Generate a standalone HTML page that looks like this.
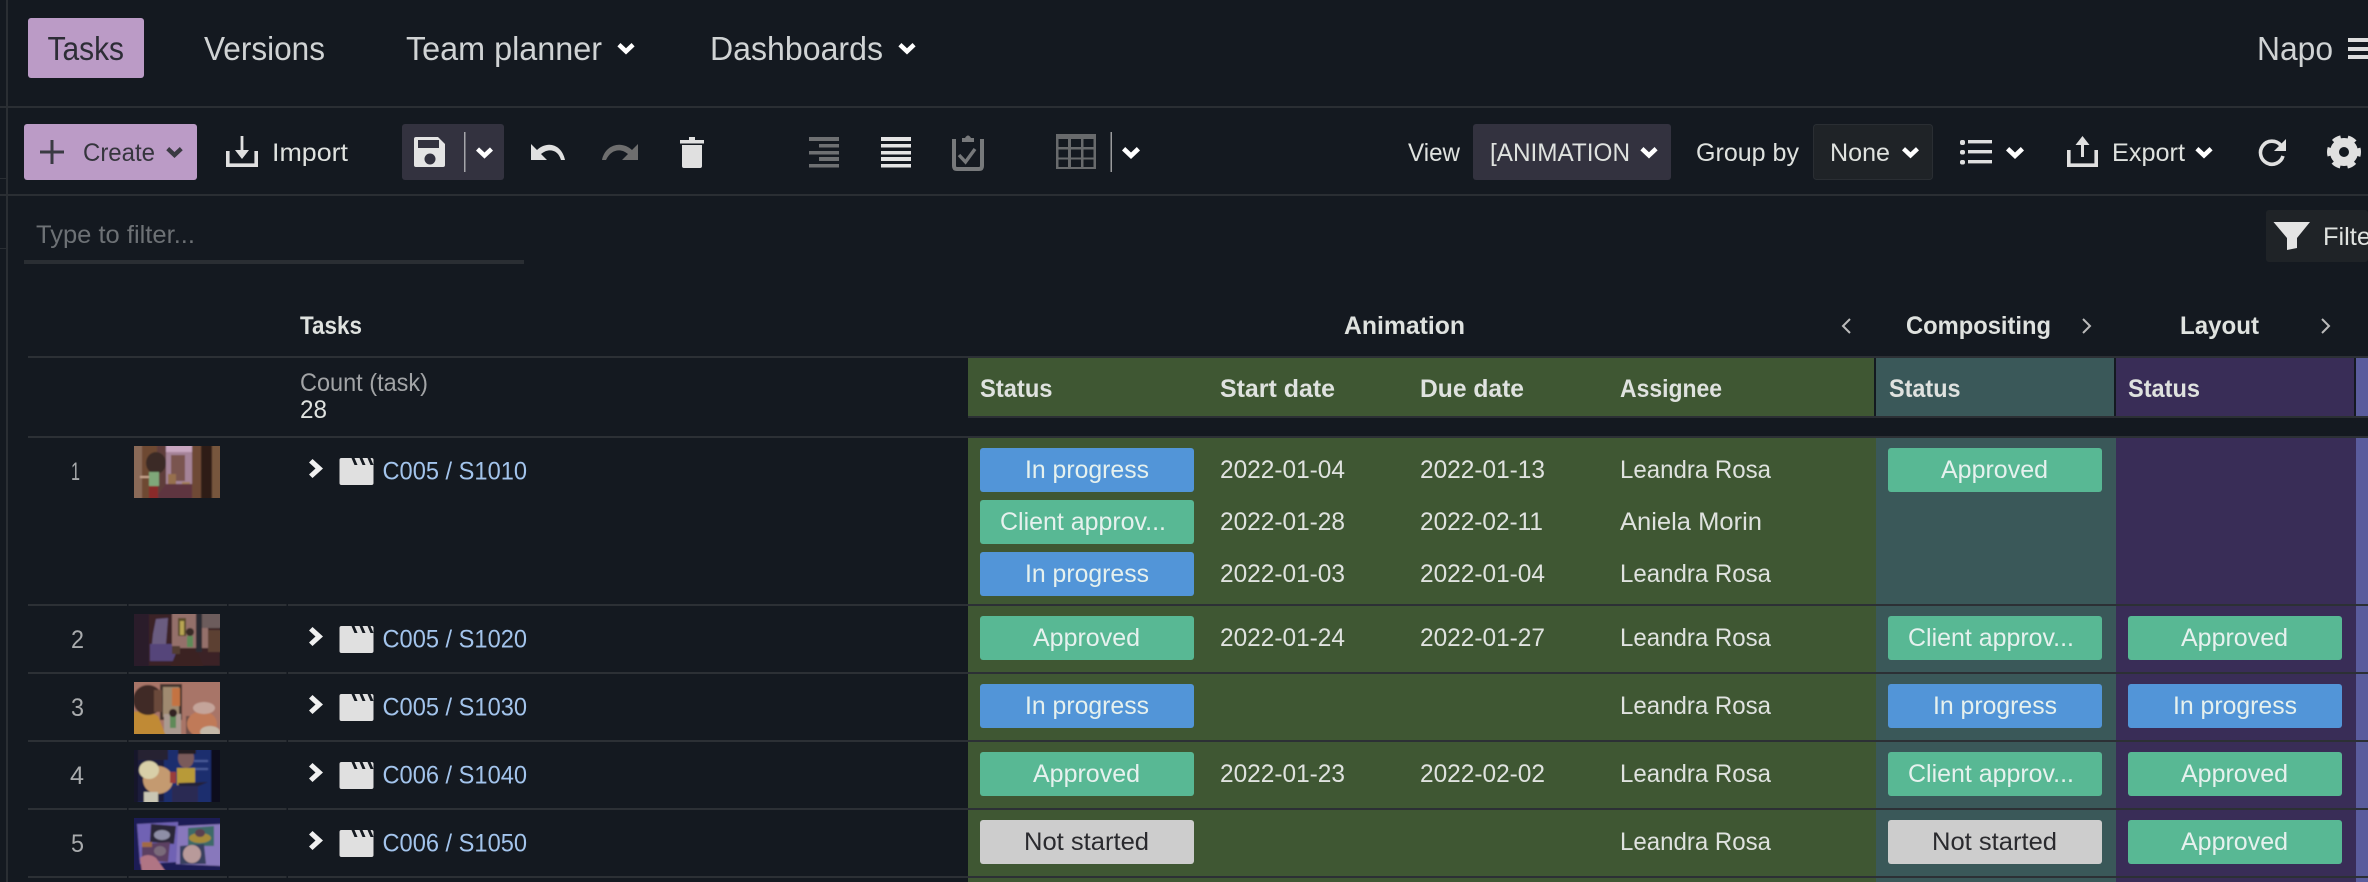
<!DOCTYPE html>
<html><head><meta charset="utf-8"><title>Tasks</title>
<style>
html,body{margin:0;padding:0;background:#141920;width:2368px;height:882px;overflow:hidden}
svg{display:block}
text{font-family:"Liberation Sans",sans-serif;font-size:25px;fill:#dfe2df}
.nav{font-size:33px;fill:#d0d3d4}
.b{font-weight:bold;font-size:25px}
.lnk{fill:#a3c4ec}
.num{fill:#a9abad}
.p{fill:#e6f1ee}
.d{fill:#2a2a2e}
</style></head><body>
<svg xmlns="http://www.w3.org/2000/svg" width="2368" height="882" viewBox="0 0 2368 882">
<defs>
<filter id="bl" x="0" y="0" width="100%" height="100%"><feGaussianBlur stdDeviation="0.9"/></filter>
<symbol id="ch" viewBox="0 0 18 12"><path d="M0 3.5L3.2 0L9 5.5L14.8 0L18 3.5L9 12Z"/></symbol>
<symbol id="rt" viewBox="0 0 14 19"><path d="M0 3.5L3.5 0L14 9.5L3.5 19L0 15.5L6.5 9.5Z" fill="#f0f0f0"/></symbol>
<symbol id="cl" viewBox="0 0 34 27"><path d="M0 2Q0 0 2 0H32Q34 0 34 2V25Q34 27 32 27H2Q0 27 0 25Z" fill="#e0e0e0"/><path d="M0 0H7V7H0ZM12 0h3l3 7h-3zM20 0h3l3 7h-3zM28 0h3l3 7h-3z" fill="#141920"/><path d="M0 2Q0 0 2 0H7V7H0Z" fill="#e0e0e0"/></symbol>
</defs>

<rect width="2368" height="882" fill="#141920"/>
<!-- frame lines -->
<rect x="6" y="0" width="2" height="882" fill="#2a2e33"/>
<rect y="106" width="2368" height="2" fill="#2a2e33"/>
<rect y="194" width="2368" height="2" fill="#2a2e33"/>
<rect y="178" width="6" height="1" fill="#2a2e33"/>
<rect y="248" width="6" height="1" fill="#2a2e33"/>

<!-- nav -->
<rect x="28" y="18" width="116" height="60" rx="3" fill="#bb9bc6"/>
<text class="nav" x="47.5" y="60" textLength="76.5" lengthAdjust="spacingAndGlyphs" style="fill:#2d2d36">Tasks</text>
<text class="nav" x="204" y="60" textLength="121" lengthAdjust="spacingAndGlyphs">Versions</text>
<text class="nav" x="406" y="60" textLength="196" lengthAdjust="spacingAndGlyphs">Team planner</text>
<use href="#ch" x="617" y="43" width="18" height="11.5" fill="#fff"/>
<text class="nav" x="710" y="60" textLength="173" lengthAdjust="spacingAndGlyphs">Dashboards</text>
<use href="#ch" x="898" y="43" width="18" height="11.5" fill="#fff"/>
<text class="nav" x="2257" y="60" textLength="76" lengthAdjust="spacingAndGlyphs">Napo</text>
<rect x="2348" y="38" width="20" height="4" fill="#ddd"/><rect x="2348" y="47" width="20" height="4" fill="#ddd"/><rect x="2348" y="55" width="20" height="4" fill="#ddd"/>

<!-- toolbar -->
<rect x="24" y="124" width="173" height="56" rx="3" fill="#bb9bc6"/>
<path d="M40 150.5H64V153.5H40ZM50.5 140H53.5V164H50.5Z" fill="#3a3a42"/>
<text x="83" y="161" textLength="72" lengthAdjust="spacingAndGlyphs" style="fill:#35353d">Create</text>
<use href="#ch" x="166" y="147" width="17" height="11" fill="#3a3a42"/>

<path d="M227.8 151V165.2H256.2V151" fill="none" stroke="#e0e0e0" stroke-width="3.6"/>
<path d="M240.6 136H243.4V150H249L242 159L235 150H240.6Z" fill="#e0e0e0"/>
<text x="272" y="161" textLength="76" lengthAdjust="spacingAndGlyphs">Import</text>

<rect x="402" y="124" width="102" height="56" rx="3" fill="#33323f"/>
<path d="M416 137H438L445 144V165Q445 167 443 167H416Q414 167 414 165V139Q414 137 416 137Z" fill="#e4e4e4"/>
<rect x="418" y="140" width="21" height="8" fill="#33323f"/>
<circle cx="430" cy="159" r="5.5" fill="#33323f"/>
<rect x="464" y="132" width="1.5" height="40" fill="#a5a5aa"/>
<use href="#ch" x="476" y="147" width="17" height="12" fill="#fff"/>

<path d="M531 144V160H547L541 154C548 148 558 149 561 160H565C562 145 548 140 537 150Z" fill="#e0e0e0"/>
<path d="M638 144V160H622L628 154C621 148 611 149 606 160H602C605 145 621 140 632 150Z" fill="#6e6e6e"/>
<path d="M689 137H695V140H704V143.5H680V140H689ZM682 145H702V166Q702 168 700 168H684Q682 168 682 166Z" fill="#e0e0e0"/>

<g fill="#6e7072"><rect x="809" y="137" width="30" height="4"/><rect x="819" y="144" width="20" height="3.5"/><rect x="809" y="151" width="30" height="3.5"/><rect x="819" y="157" width="20" height="4"/><rect x="809" y="164" width="30" height="3.5"/></g>
<g fill="#e4e4e4"><rect x="881" y="137" width="30" height="4"/><rect x="881" y="144" width="30" height="3.5"/><rect x="881" y="151" width="30" height="3.5"/><rect x="881" y="157" width="30" height="4"/><rect x="881" y="164" width="30" height="3.5"/></g>
<path d="M954 139V166Q954 169 957 169H979Q982 169 982 166V139" fill="none" stroke="#77797b" stroke-width="4"/>
<path d="M962 142V138H965Q968 133 971 138H974V142Z" fill="#77797b"/>
<path d="M959 155L965.5 162L975 149" fill="none" stroke="#77797b" stroke-width="3.4"/>
<rect x="1056" y="134" width="40" height="35" fill="#686a6c"/>
<g fill="#141920"><rect x="1058.5" y="139" width="9.5" height="8"/><rect x="1071" y="139" width="10" height="8"/><rect x="1083.5" y="139" width="10" height="8"/><rect x="1058.5" y="149.5" width="9.5" height="8"/><rect x="1071" y="149.5" width="10" height="8"/><rect x="1083.5" y="149.5" width="10" height="8"/><rect x="1058.5" y="159.5" width="9.5" height="7.5"/><rect x="1071" y="159.5" width="10" height="7.5"/><rect x="1083.5" y="159.5" width="10" height="7.5"/></g>
<rect x="1110.5" y="132" width="1.5" height="40" fill="#9a9b9d"/>
<use href="#ch" x="1122" y="147" width="18" height="12" fill="#fff"/>

<text x="1408" y="161" textLength="52" lengthAdjust="spacingAndGlyphs">View</text>
<rect x="1473" y="124" width="198" height="56" rx="3" fill="#33323f"/>
<text x="1490" y="161" textLength="140" lengthAdjust="spacingAndGlyphs">[ANIMATION</text>
<use href="#ch" x="1640" y="147" width="18" height="11.5" fill="#fff"/>
<text x="1696" y="161" textLength="103" lengthAdjust="spacingAndGlyphs">Group by</text>
<rect x="1813.5" y="124.5" width="119" height="55" rx="3" fill="#1f2327" stroke="#2a2e33"/>
<text x="1830" y="161" textLength="60" lengthAdjust="spacingAndGlyphs">None</text>
<use href="#ch" x="1902" y="147" width="17" height="11.5" fill="#fff"/>
<g fill="#e0e0e0"><rect x="1960" y="140" width="5" height="5" rx="2"/><rect x="1960" y="150" width="5" height="4.5" rx="2"/><rect x="1960" y="160" width="5" height="4.5" rx="2"/><rect x="1968" y="140" width="24" height="3.4"/><rect x="1968" y="150" width="24" height="3.4"/><rect x="1968" y="160" width="24" height="3.4"/></g>
<use href="#ch" x="2006" y="147" width="18" height="12" fill="#fff"/>
<path d="M2068.8 150V165.2H2096.2V150" fill="none" stroke="#e0e0e0" stroke-width="3.6"/>
<path d="M2081 157V145H2075.5L2082.5 136L2089.5 145H2084V157Z" fill="#e0e0e0"/>
<text x="2112" y="161" textLength="73" lengthAdjust="spacingAndGlyphs">Export</text>
<use href="#ch" x="2195" y="147" width="18" height="11.5" fill="#fff"/>
<path d="M2280.5 145A11.5 11.5 0 1 0 2283 156" fill="none" stroke="#e0e0e0" stroke-width="3.6"/>
<path d="M2286 139V151H2274Z" fill="#e0e0e0"/>
<circle cx="2344" cy="152" r="9.5" fill="none" stroke="#e0e0e0" stroke-width="9"/>
<circle cx="2344" cy="152" r="14.5" fill="none" stroke="#e0e0e0" stroke-width="5" stroke-dasharray="8.2 7" stroke-dashoffset="4"/>

<!-- filter row -->
<text x="36" y="243" textLength="159" lengthAdjust="spacingAndGlyphs" style="fill:#6d7175">Type to filter...</text>
<rect x="24" y="260" width="500" height="4" fill="#2a2e33"/>
<rect x="2266" y="210" width="102" height="52" rx="3" fill="#1f2327"/>
<path d="M2273.5 222H2310L2297 238V248L2287 250V238Z" fill="#e4e4e4"/>
<text x="2323" y="245" textLength="48" lengthAdjust="spacingAndGlyphs">Filte</text>

<!-- group headers -->
<text class="b" x="300" y="334" textLength="62" lengthAdjust="spacingAndGlyphs">Tasks</text>
<text class="b" x="1344" y="334" textLength="121" lengthAdjust="spacingAndGlyphs">Animation</text>
<path d="M1850 319L1843 326L1850 333" fill="none" stroke="#bbb" stroke-width="2"/>
<text class="b" x="1906" y="334" textLength="145" lengthAdjust="spacingAndGlyphs">Compositing</text>
<path d="M2083 319L2090 326L2083 333" fill="none" stroke="#bbb" stroke-width="2"/>
<text class="b" x="2180" y="334" textLength="79" lengthAdjust="spacingAndGlyphs">Layout</text>
<path d="M2322 319L2329 326L2322 333" fill="none" stroke="#bbb" stroke-width="2"/>
<rect x="28" y="356" width="2340" height="2" fill="#2c3035"/>

<!-- column headers -->
<text x="300" y="391" textLength="128" lengthAdjust="spacingAndGlyphs" style="fill:#a2a4a6">Count (task)</text>
<text x="300" y="418" textLength="27" lengthAdjust="spacingAndGlyphs">28</text>
<rect x="968" y="358" width="906" height="58" fill="#3f5733"/>
<rect x="1876" y="358" width="238" height="58" fill="#3a5859"/>
<rect x="2116" y="358" width="238" height="58" fill="#392d57"/>
<rect x="2356" y="358" width="12" height="58" fill="#5a5c9c"/>
<rect x="968" y="416" width="1400" height="2" fill="#2c3035"/>
<rect x="28" y="436" width="2340" height="2" fill="#2c3035"/>
<text class="b" x="980" y="397" textLength="72.5" lengthAdjust="spacingAndGlyphs">Status</text>
<text class="b" x="1220" y="397" textLength="115" lengthAdjust="spacingAndGlyphs">Start date</text>
<text class="b" x="1420" y="397" textLength="104" lengthAdjust="spacingAndGlyphs">Due date</text>
<text class="b" x="1620" y="397" textLength="102" lengthAdjust="spacingAndGlyphs">Assignee</text>
<text class="b" x="1889" y="397" textLength="71.5" lengthAdjust="spacingAndGlyphs">Status</text>
<text class="b" x="2128" y="397" textLength="72" lengthAdjust="spacingAndGlyphs">Status</text>

<!-- coloured columns -->
<rect x="968" y="438" width="908" height="444" fill="#3f5733"/>
<rect x="1876" y="438" width="240" height="444" fill="#3a5859"/>
<rect x="2116" y="438" width="240" height="444" fill="#392d57"/>
<rect x="2356" y="438" width="12" height="444" fill="#5a5c9c"/>

<!-- row lines -->
<g fill="#2c3035">
<rect x="28" y="604" width="2340" height="2"/>
<rect x="28" y="672" width="2340" height="2"/>
<rect x="28" y="740" width="2340" height="2"/>
<rect x="28" y="808" width="2340" height="2"/>
<rect x="28" y="876" width="2340" height="2"/>
</g>
<g fill="#141920">
<rect x="127" y="604" width="1.5" height="2"/><rect x="227" y="604" width="1.5" height="2"/><rect x="286.5" y="604" width="1.5" height="2"/>
<rect x="127" y="672" width="1.5" height="2"/><rect x="227" y="672" width="1.5" height="2"/><rect x="286.5" y="672" width="1.5" height="2"/>
<rect x="127" y="740" width="1.5" height="2"/><rect x="227" y="740" width="1.5" height="2"/><rect x="286.5" y="740" width="1.5" height="2"/>
<rect x="127" y="808" width="1.5" height="2"/><rect x="227" y="808" width="1.5" height="2"/><rect x="286.5" y="808" width="1.5" height="2"/>
<rect x="127" y="876" width="1.5" height="2"/><rect x="227" y="876" width="1.5" height="2"/><rect x="286.5" y="876" width="1.5" height="2"/>
</g>

<!-- row numbers -->
<text class="num" x="71" y="480" textLength="9" lengthAdjust="spacingAndGlyphs">1</text>
<text class="num" x="71" y="648" textLength="13" lengthAdjust="spacingAndGlyphs">2</text>
<text class="num" x="71" y="716" textLength="13" lengthAdjust="spacingAndGlyphs">3</text>
<text class="num" x="70" y="784" textLength="14" lengthAdjust="spacingAndGlyphs">4</text>
<text class="num" x="71" y="852" textLength="13" lengthAdjust="spacingAndGlyphs">5</text>

<!-- thumb 1 -->
<svg x="134" y="446" width="86" height="52" viewBox="0 0 86 52"><g filter="url(#bl)">
<rect width="86" height="52" fill="#5c3f33"/>
<rect x="-2" y="-2" width="10" height="56" fill="#8a6a58"/><rect x="8" y="-2" width="15" height="56" fill="#6e4a30"/>
<rect x="23" y="-2" width="13" height="56" fill="#5e3d3a"/>
<rect x="32" y="-2" width="26" height="44" fill="#a58398"/><rect x="32" y="-2" width="26" height="8" fill="#c9a6c0"/>
<rect x="37" y="9" width="14" height="26" fill="#7a5450"/>
<rect x="34" y="28" width="8" height="10" fill="#96704e"/><rect x="48" y="36" width="8" height="6" fill="#a5805a"/>
<path d="M20 54L32 38H60L68 54Z" fill="#5e3540"/>
<rect x="58" y="-2" width="9" height="56" fill="#6e4a34"/><rect x="67" y="-2" width="11" height="56" fill="#2d1b14"/><rect x="78" y="-2" width="10" height="56" fill="#77573c"/>
<ellipse cx="22" cy="17" rx="10" ry="11" fill="#3a2a28"/><rect x="15" y="26" width="10" height="14" fill="#7fa77a"/><rect x="15" y="40" width="9" height="14" fill="#8a2a2a"/><rect x="6" y="30" width="9" height="2" fill="#c9a58e"/>
</g></svg>
<!-- thumb 2 -->
<svg x="134" y="614" width="86" height="52" viewBox="0 0 86 52"><g filter="url(#bl)">
<rect width="86" height="52" fill="#3a2226"/>
<rect x="-2" y="-2" width="17" height="56" fill="#2c1f2c"/>
<path d="M19 20L22 5L34 4L32 30H18Z" fill="#6a5b80"/><rect x="16" y="30" width="30" height="17" fill="#54457a"/>
<rect x="38" y="-2" width="36" height="36" fill="#94706a"/>
<rect x="44" y="4" width="8" height="18" fill="#5c4e2a"/><rect x="46" y="7" width="4" height="14" fill="#b8a552"/>
<ellipse cx="56" cy="18" rx="4" ry="4" fill="#382a26"/><rect x="53" y="22" width="6" height="11" fill="#5f8a58"/>
<path d="M36 54L44 34H62L70 54Z" fill="#3a2422"/><rect x="38" y="32" width="8" height="8" fill="#523c30"/>
<rect x="62" y="-2" width="6" height="40" fill="#2a2a30"/><rect x="74" y="16" width="14" height="22" fill="#5c4030"/><rect x="68" y="-2" width="20" height="16" fill="#6c5c5c"/>
</g></svg>
<!-- thumb 3 -->
<svg x="134" y="682" width="86" height="52" viewBox="0 0 86 52"><g filter="url(#bl)">
<rect x="-2" y="-2" width="90" height="56" fill="#a87468"/>
<rect x="26" y="2" width="22" height="36" fill="#45352e"/>
<rect x="29" y="5" width="16" height="30" fill="#9f8a70"/><rect x="38" y="6" width="8" height="18" fill="#c47342"/>
<rect x="30" y="32" width="17" height="22" fill="#aa9a90"/>
<path d="M-2 54V30Q14 28 24 34L32 54Z" fill="#c08a34"/>
<ellipse cx="14" cy="18" rx="15" ry="15" fill="#3f2c28"/><rect x="20" y="8" width="8" height="22" fill="#6a4a3a"/>
<rect x="36" y="34" width="6" height="12" fill="#5f8a58"/><ellipse cx="39" cy="31" rx="4" ry="4" fill="#302420"/>
<rect x="52" y="34" width="8" height="20" fill="#705048"/>
<ellipse cx="68" cy="42" rx="15" ry="13" fill="#c07a58"/><ellipse cx="70" cy="26" rx="11" ry="6" fill="#c4a49a"/><ellipse cx="76" cy="50" rx="10" ry="6" fill="#c4b8a8"/>
</g></svg>
<!-- thumb 4 -->
<svg x="134" y="750" width="86" height="52" viewBox="0 0 86 52"><g filter="url(#bl)">
<rect x="-2" y="-2" width="90" height="56" fill="#1f2f6e"/>
<rect x="-2" y="-2" width="6" height="56" fill="#16132a"/><rect x="77" y="-2" width="11" height="56" fill="#100e1c"/>
<rect x="4" y="-2" width="30" height="12" fill="#252030"/>
<rect x="4" y="10" width="26" height="42" fill="#1c1c3c"/>
<rect x="60" y="18" width="14" height="2" fill="#4a5a98"/><rect x="60" y="10" width="14" height="2" fill="#4a5a98"/>
<ellipse cx="24" cy="30" rx="15" ry="14" fill="#c49a70"/><ellipse cx="15" cy="20" rx="10" ry="9" fill="#d8cfa8"/><rect x="10" y="42" width="14" height="12" fill="#c9c6b4"/><rect x="36" y="22" width="6" height="11" fill="#9a3c3a"/>
<ellipse cx="52" cy="8" rx="8" ry="10" fill="#7a5a5a"/><path d="M44 -2H62V4H44Z" fill="#241a20"/>
<rect x="43" y="18" width="18" height="17" fill="#b89a38"/>
<path d="M44 33L74 32L60 38L46 38Z" fill="#242038"/>
<rect x="38" y="36" width="26" height="18" fill="#2c2c52"/>
</g></svg>
<!-- thumb 5 -->
<svg x="134" y="818" width="86" height="52" viewBox="0 0 86 52"><g filter="url(#bl)">
<rect x="-2" y="-2" width="90" height="56" fill="#1a1c55"/>
<path d="M3 6L44 4L44 44L6 46Z" fill="#7062b4"/><path d="M44 8L88 6V48L42 46Z" fill="#8878bc"/>
<path d="M17 6L42 8L40 26L16 24Z" fill="#2c2638"/><ellipse cx="28" cy="17" rx="8" ry="5" fill="#8e8ea6"/>
<path d="M8 26L36 24L34 44L8 42Z" fill="#5c4062"/><ellipse cx="26" cy="33" rx="6" ry="5" fill="#7a6a7a"/>
<rect x="8" y="24" width="10" height="5" fill="#a06a44"/>
<path d="M54 10L80 8L80 28L54 28Z" fill="#3c6a68"/><ellipse cx="66" cy="20" rx="11" ry="5" fill="#a48a3a"/><ellipse cx="66" cy="15" rx="5" ry="4" fill="#5a4050"/>
<path d="M46 28L70 26L72 46L46 46Z" fill="#39405e"/><ellipse cx="58" cy="36" rx="9" ry="9" fill="#b89a9a"/>
<path d="M6 40Q14 34 22 40L32 54H8Z" fill="#b07484"/>
</g></svg>

<!-- row headers -->
<use href="#rt" x="309" y="459" width="14" height="19"/><use href="#cl" x="339.5" y="458" width="34" height="27"/>
<text class="lnk" x="382.5" y="479.5" textLength="144.5" lengthAdjust="spacingAndGlyphs">C005 / S1010</text>
<use href="#rt" x="309" y="627" width="14" height="19"/><use href="#cl" x="339.5" y="626" width="34" height="27"/>
<text class="lnk" x="382.5" y="647.5" textLength="144.5" lengthAdjust="spacingAndGlyphs">C005 / S1020</text>
<use href="#rt" x="309" y="695" width="14" height="19"/><use href="#cl" x="339.5" y="694" width="34" height="27"/>
<text class="lnk" x="382.5" y="715.5" textLength="144.5" lengthAdjust="spacingAndGlyphs">C005 / S1030</text>
<use href="#rt" x="309" y="763" width="14" height="19"/><use href="#cl" x="339.5" y="762" width="34" height="27"/>
<text class="lnk" x="382.5" y="783.5" textLength="144.5" lengthAdjust="spacingAndGlyphs">C006 / S1040</text>
<use href="#rt" x="309" y="831" width="14" height="19"/><use href="#cl" x="339.5" y="830" width="34" height="27"/>
<text class="lnk" x="382.5" y="851.5" textLength="144.5" lengthAdjust="spacingAndGlyphs">C006 / S1050</text>

<!-- pills: animation status -->
<rect x="980" y="448" width="214" height="44" rx="3" fill="#5295d8"/>
<text class="p" x="1025" y="478" textLength="124" lengthAdjust="spacingAndGlyphs">In progress</text>
<rect x="980" y="500" width="214" height="44" rx="3" fill="#58b894"/>
<text class="p" x="1000" y="530" textLength="166" lengthAdjust="spacingAndGlyphs">Client approv...</text>
<rect x="980" y="552" width="214" height="44" rx="3" fill="#5295d8"/>
<text class="p" x="1025" y="582" textLength="124" lengthAdjust="spacingAndGlyphs">In progress</text>
<rect x="980" y="616" width="214" height="44" rx="3" fill="#58b894"/>
<text class="p" x="1033" y="646" textLength="107" lengthAdjust="spacingAndGlyphs">Approved</text>
<rect x="980" y="684" width="214" height="44" rx="3" fill="#5295d8"/>
<text class="p" x="1025" y="714" textLength="124" lengthAdjust="spacingAndGlyphs">In progress</text>
<rect x="980" y="752" width="214" height="44" rx="3" fill="#58b894"/>
<text class="p" x="1033" y="782" textLength="107" lengthAdjust="spacingAndGlyphs">Approved</text>
<rect x="980" y="820" width="214" height="44" rx="3" fill="#cdcdcd"/>
<text class="d" x="1024" y="850" textLength="125" lengthAdjust="spacingAndGlyphs">Not started</text>

<!-- dates and assignees -->
<text x="1220" y="478" textLength="125" lengthAdjust="spacingAndGlyphs">2022-01-04</text>
<text x="1420" y="478" textLength="125" lengthAdjust="spacingAndGlyphs">2022-01-13</text>
<text x="1620" y="478" textLength="151" lengthAdjust="spacingAndGlyphs">Leandra Rosa</text>
<text x="1220" y="530" textLength="125" lengthAdjust="spacingAndGlyphs">2022-01-28</text>
<text x="1420" y="530" textLength="123" lengthAdjust="spacingAndGlyphs">2022-02-11</text>
<text x="1620" y="530" textLength="142" lengthAdjust="spacingAndGlyphs">Aniela Morin</text>
<text x="1220" y="582" textLength="125" lengthAdjust="spacingAndGlyphs">2022-01-03</text>
<text x="1420" y="582" textLength="125" lengthAdjust="spacingAndGlyphs">2022-01-04</text>
<text x="1620" y="582" textLength="151" lengthAdjust="spacingAndGlyphs">Leandra Rosa</text>
<text x="1220" y="646" textLength="125" lengthAdjust="spacingAndGlyphs">2022-01-24</text>
<text x="1420" y="646" textLength="125" lengthAdjust="spacingAndGlyphs">2022-01-27</text>
<text x="1620" y="646" textLength="151" lengthAdjust="spacingAndGlyphs">Leandra Rosa</text>
<text x="1620" y="714" textLength="151" lengthAdjust="spacingAndGlyphs">Leandra Rosa</text>
<text x="1220" y="782" textLength="125" lengthAdjust="spacingAndGlyphs">2022-01-23</text>
<text x="1420" y="782" textLength="125" lengthAdjust="spacingAndGlyphs">2022-02-02</text>
<text x="1620" y="782" textLength="151" lengthAdjust="spacingAndGlyphs">Leandra Rosa</text>
<text x="1620" y="850" textLength="151" lengthAdjust="spacingAndGlyphs">Leandra Rosa</text>

<!-- compositing pills -->
<rect x="1888" y="448" width="214" height="44" rx="3" fill="#58b894"/>
<text class="p" x="1941" y="478" textLength="107" lengthAdjust="spacingAndGlyphs">Approved</text>
<rect x="1888" y="616" width="214" height="44" rx="3" fill="#58b894"/>
<text class="p" x="1908" y="646" textLength="166" lengthAdjust="spacingAndGlyphs">Client approv...</text>
<rect x="1888" y="684" width="214" height="44" rx="3" fill="#5295d8"/>
<text class="p" x="1933" y="714" textLength="124" lengthAdjust="spacingAndGlyphs">In progress</text>
<rect x="1888" y="752" width="214" height="44" rx="3" fill="#58b894"/>
<text class="p" x="1908" y="782" textLength="166" lengthAdjust="spacingAndGlyphs">Client approv...</text>
<rect x="1888" y="820" width="214" height="44" rx="3" fill="#cdcdcd"/>
<text class="d" x="1932" y="850" textLength="125" lengthAdjust="spacingAndGlyphs">Not started</text>

<!-- layout pills -->
<rect x="2128" y="616" width="214" height="44" rx="3" fill="#58b894"/>
<text class="p" x="2181" y="646" textLength="107" lengthAdjust="spacingAndGlyphs">Approved</text>
<rect x="2128" y="684" width="214" height="44" rx="3" fill="#5295d8"/>
<text class="p" x="2173" y="714" textLength="124" lengthAdjust="spacingAndGlyphs">In progress</text>
<rect x="2128" y="752" width="214" height="44" rx="3" fill="#58b894"/>
<text class="p" x="2181" y="782" textLength="107" lengthAdjust="spacingAndGlyphs">Approved</text>
<rect x="2128" y="820" width="214" height="44" rx="3" fill="#58b894"/>
<text class="p" x="2181" y="850" textLength="107" lengthAdjust="spacingAndGlyphs">Approved</text>
</svg>
</body></html>
